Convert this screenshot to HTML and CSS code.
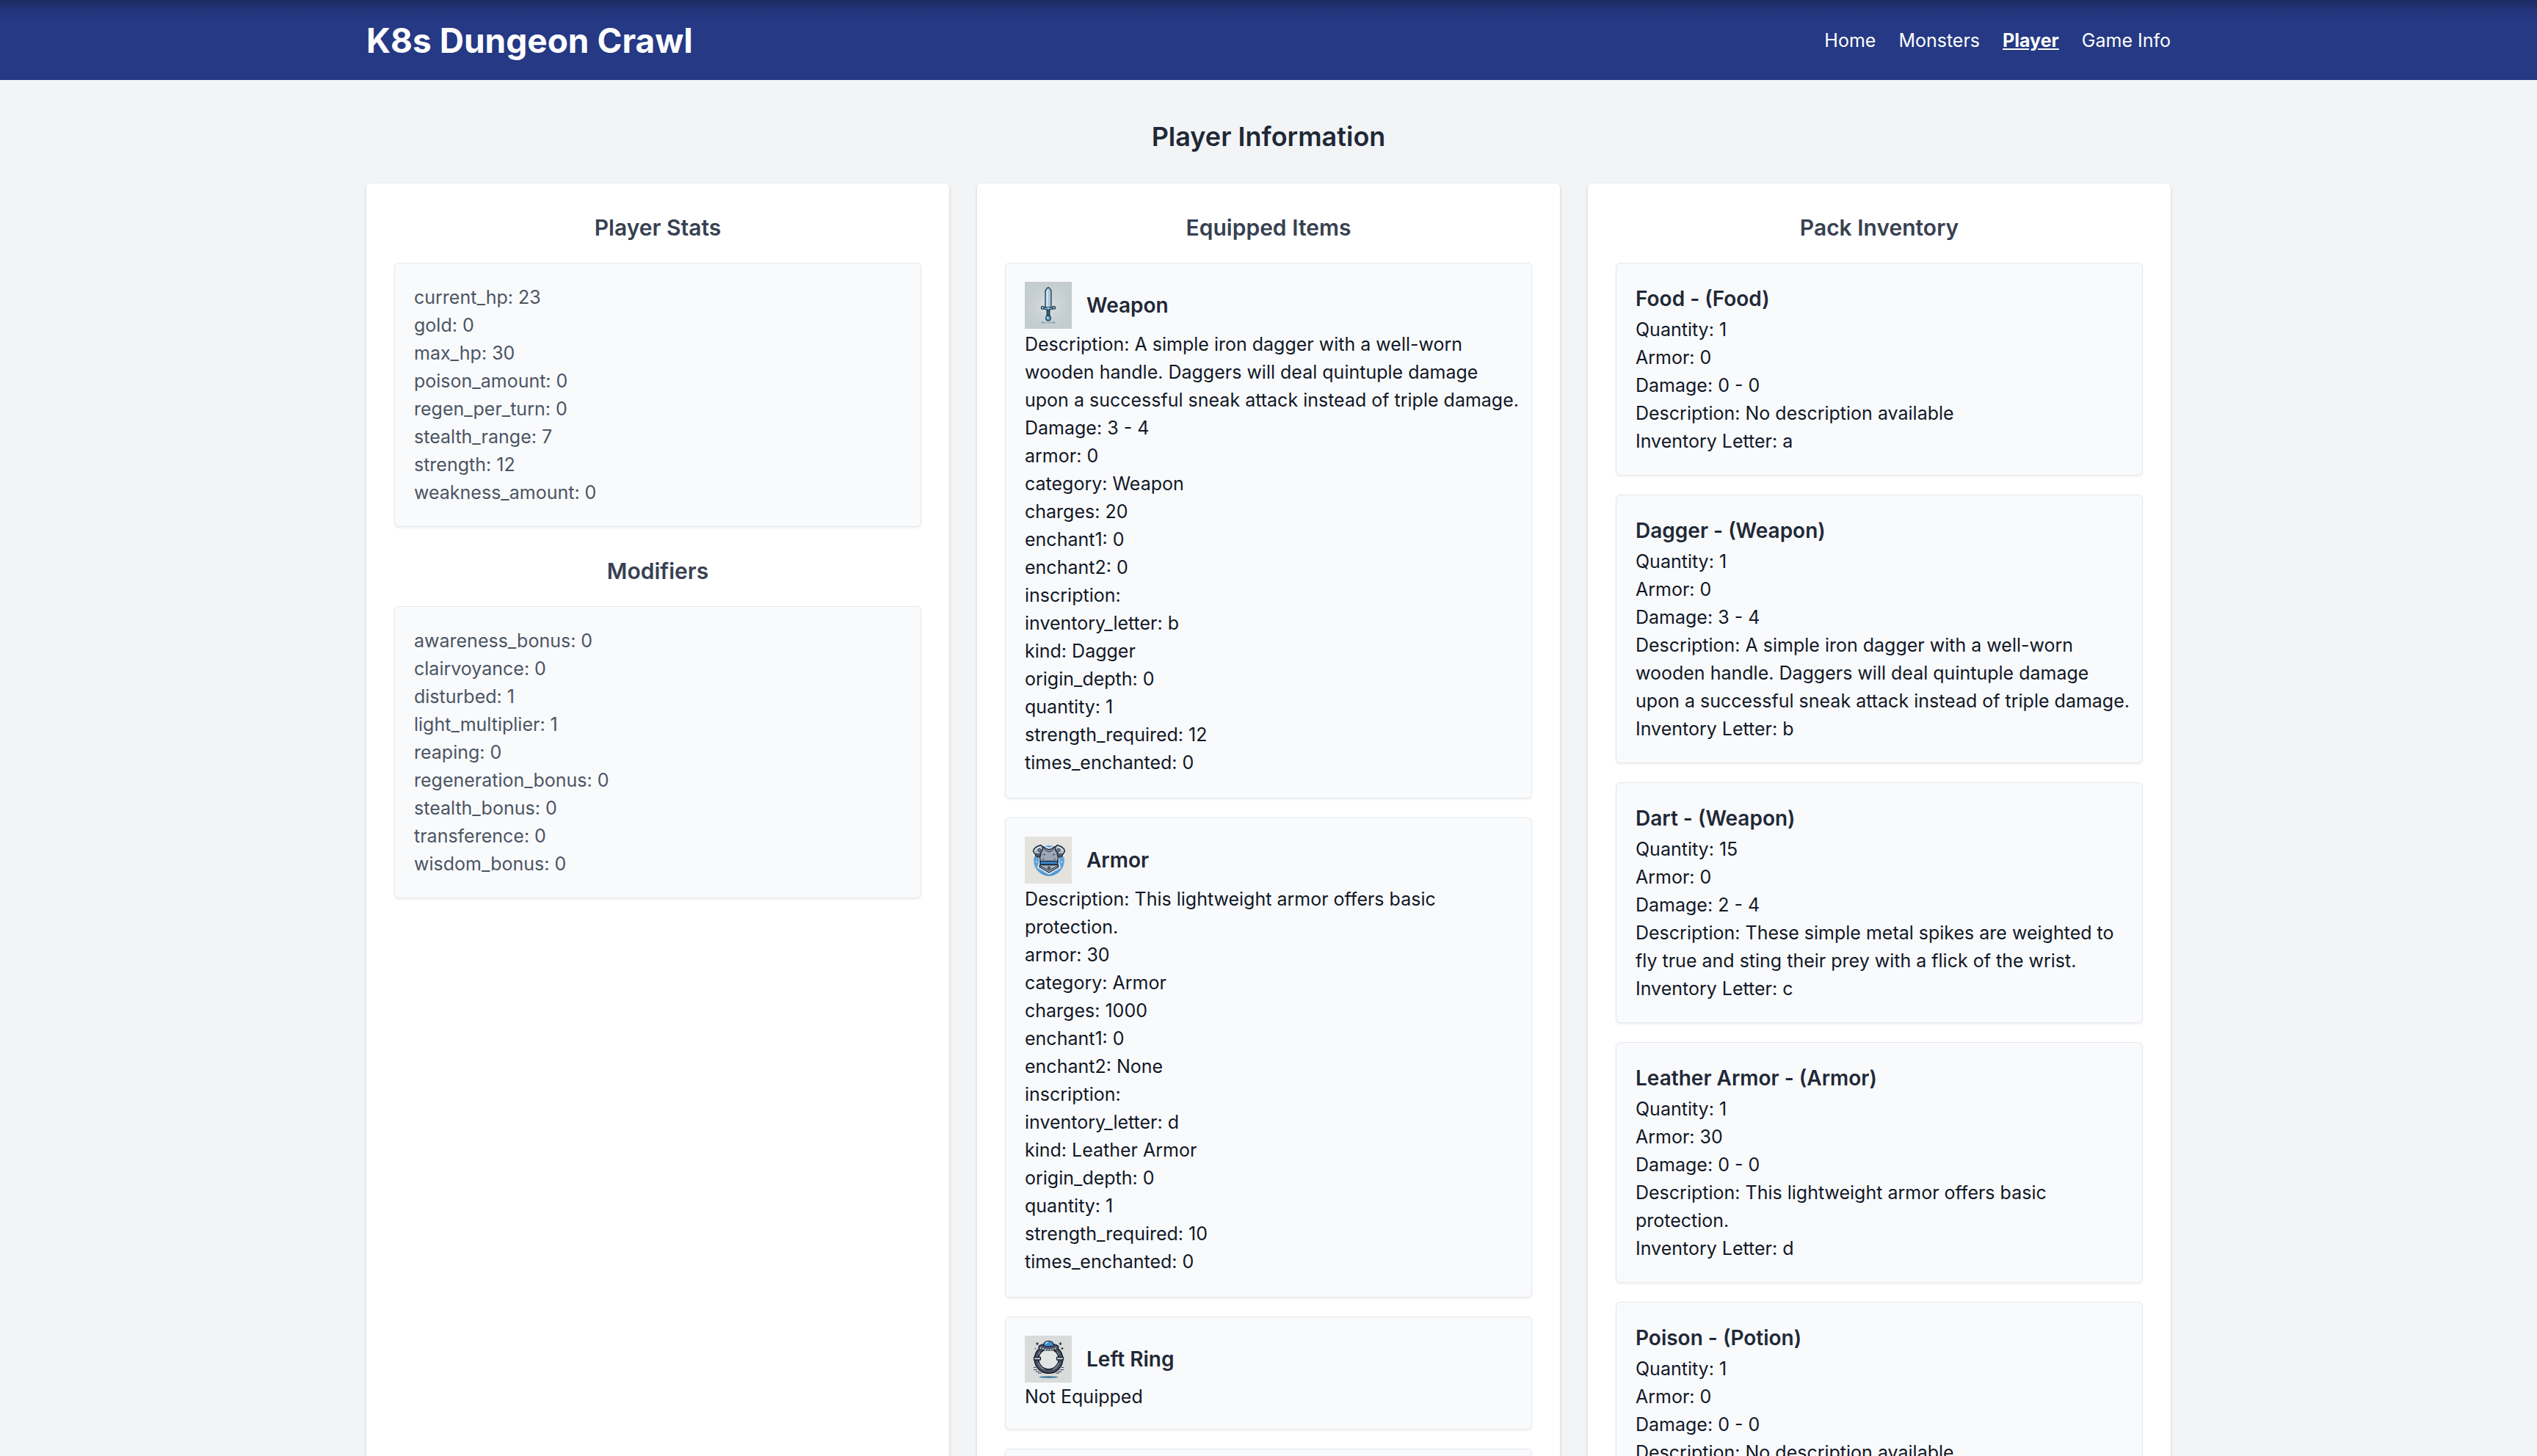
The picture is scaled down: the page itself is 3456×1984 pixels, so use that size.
FILE: index.html
```html
<!DOCTYPE html>
<html lang="en">
<head>
  <meta charset="utf-8">
  <meta name="viewport" content="width=device-width, initial-scale=1">
  <title>K8s Dungeon Crawl</title>
  <link rel="stylesheet" href="styles.css">
</head>
<body>
  <header class="site-header">
    <div class="container header-row">
      <h1 class="brand">K8s Dungeon Crawl</h1>
      <nav class="nav">
        <a class="nav-link" href="#home">Home</a>
        <a class="nav-link" href="#monsters">Monsters</a>
        <a class="nav-link nav-link-active" href="#player" aria-current="page">Player</a>
        <a class="nav-link" href="#info">Game Info</a>
      </nav>
    </div>
  </header>

  <main class="container page">
    <h2 class="page-title">Player Information</h2>
    <div class="columns">
      <section class="panel">
        <h3 class="panel-title">Player Stats</h3>
        <ul class="card stats">
          <li>current_hp: 23</li>
          <li>gold: 0</li>
          <li>max_hp: 30</li>
          <li>poison_amount: 0</li>
          <li>regen_per_turn: 0</li>
          <li>stealth_range: 7</li>
          <li>strength: 12</li>
          <li>weakness_amount: 0</li>
        </ul>
        <h3 class="panel-title panel-title-next">Modifiers</h3>
        <ul class="card stats">
          <li>awareness_bonus: 0</li>
          <li>clairvoyance: 0</li>
          <li>disturbed: 1</li>
          <li>light_multiplier: 1</li>
          <li>reaping: 0</li>
          <li>regeneration_bonus: 0</li>
          <li>stealth_bonus: 0</li>
          <li>transference: 0</li>
          <li>wisdom_bonus: 0</li>
        </ul>
      </section>

      <section class="panel">
        <h3 class="panel-title">Equipped Items</h3>
        <div class="card-list">
          <article class="card">
            <div class="item-head">
              <svg class="item-icon" viewBox="0 0 64 64" aria-hidden="true">
                <defs>
                  <radialGradient id="steel-bg"><stop offset="0" stop-color="#dde2e5"/><stop offset=".45" stop-color="#cdd4d7"/><stop offset="1" stop-color="#c3cccf"/></radialGradient>
                </defs>
                <rect width="64" height="64" fill="url(#steel-bg)"/>
                <path d="M28 35V13Q29 9 32 7.500Q35 9 36 13V35Z" fill="#a9cbdc" stroke="#20384f" stroke-width="1.300"/>
                <path d="M29.500 34V13.500L31.500 10V34Z" fill="#d9ecf3"/>
                <path d="M30.200 38H33.800V47H30.200Z" fill="#4d7690" stroke="#1b3147" stroke-width="1.200"/>
                <path d="M30 40.500H34M30 43H34M30 45.500H34" stroke="#1b3147"/>
                <path d="M25 34.500H39V36.500L34 38H30L25 36.500Z" fill="#6ba1bd" stroke="#1b3147" stroke-width="1.200"/>
                <circle cx="24.300" cy="35.300" r="1.900" fill="#b5d6e4" stroke="#1b3147" stroke-width="1.200"/>
                <circle cx="39.700" cy="35.300" r="1.900" fill="#b5d6e4" stroke="#1b3147" stroke-width="1.200"/>
                <circle cx="32" cy="36" r="1.500" fill="#8fd0ea"/>
                <circle cx="32" cy="49.500" r="3.300" fill="#5fa9cf" stroke="#1b3147" stroke-width="1.200"/>
                <circle cx="31" cy="48.500" r="1.200" fill="#b8e0f0"/>
                <path d="M25.500 55.500H38.500" stroke="#94b3c2" stroke-width="1.800"/>
                <path d="M23.500 55.500H25M39 55.500H40.500" stroke="#4e6b7d" stroke-width="1.800"/>
              </svg>
              <h4 class="item-title">Weapon</h4>
            </div>
            <ul class="details-long">
              <li>Description: A simple iron dagger with a well-worn wooden handle. Daggers will deal quintuple damage upon a successful sneak attack instead of triple damage.</li>
              <li>Damage: 3 - 4</li>
              <li>armor: 0</li>
              <li>category: Weapon</li>
              <li>charges: 20</li>
              <li>enchant1: 0</li>
              <li>enchant2: 0</li>
              <li>inscription:</li>
              <li>inventory_letter: b</li>
              <li>kind: Dagger</li>
              <li>origin_depth: 0</li>
              <li>quantity: 1</li>
              <li>strength_required: 12</li>
              <li>times_enchanted: 0</li>
            </ul>
          </article>

          <article class="card">
            <div class="item-head">
              <svg class="item-icon" viewBox="0 0 64 64" aria-hidden="true">
                <rect width="64" height="64" fill="#e3e2dd"/>
                <circle cx="33" cy="32.800" r="20.800" fill="#5ba3da"/>
                <path d="M20 47Q33 58 46 47Q40 53.500 33 53.500Q26 53.500 20 47Z" fill="#2f79b8"/>
                <path d="M22 11L26 13Q33 19 40 13L44 11Q53 13 55 21Q54 28 46 28V36L48 42L33 50.500L18 42L20 36V28Q12 28 11 21Q13 13 22 11Z" fill="#eef1f2" stroke="#eef1f2" stroke-width="2" stroke-linejoin="round"/>
                <path d="M22 13L26 14Q33 21 40 14L44 13L46 22L45 35H21L20 22Z" fill="#9ca8b3" stroke="#1e2c40" stroke-width="1.400" stroke-linejoin="round"/>
                <path d="M25.500 16Q33 25 40.500 16" fill="none" stroke="#1e2c40"/>
                <path d="M22 11.500Q12 14 11.500 20Q13 24.500 17 25Q23 24 25 15Z" fill="#aebac4" stroke="#1e2c40" stroke-width="1.500" stroke-linejoin="round"/>
                <path d="M44 11.500Q54 14 54.500 20Q53 24.500 49 25Q43 24 41 15Z" fill="#aebac4" stroke="#1e2c40" stroke-width="1.500" stroke-linejoin="round"/>
                <path d="M14 23L15 27Q18 29 21 27L22 23M52 23L51 27Q48 29 45 27L44 23" fill="#4c596a" stroke="#1e2c40" stroke-width="1.300"/>
                <path d="M14 19Q17 14 22 14M52 19Q49 14 44 14" fill="none" stroke="#e7edf1" stroke-width="1.200"/>
                <circle cx="20" cy="18.500" r="2" fill="#7d8b98" stroke="#1e2c40"/>
                <circle cx="46" cy="18.500" r="2" fill="#7d8b98" stroke="#1e2c40"/>
                <path d="M21 33.500H45V38H21Z" fill="#3a86cc" stroke="#1e2c40" stroke-width="1.400"/>
                <path d="M20.500 38.500H45.500L46 41.500L33 49L20 41.500Z" fill="#a7b2bc" stroke="#1e2c40" stroke-width="1.400" stroke-linejoin="round"/>
                <path d="M21 40L33 46L45 40" fill="none" stroke="#1e2c40"/>
                <circle cx="33" cy="42.500" r="1.600" fill="#6b7885" stroke="#1e2c40"/>
                <g fill="#1e2c40"><circle cx="26.500" cy="24.500" r="1"/><circle cx="39.500" cy="24.500" r="1"/><circle cx="25.500" cy="30.500" r=".8"/><circle cx="40.500" cy="30.500" r=".8"/></g>
                <g fill="#d6ebf8"><circle cx="16" cy="34.500" r="1"/><circle cx="50" cy="34.500" r="1"/></g>
              </svg>
              <h4 class="item-title">Armor</h4>
            </div>
            <ul class="details-long">
              <li>Description: This lightweight armor offers basic protection.</li>
              <li>armor: 30</li>
              <li>category: Armor</li>
              <li>charges: 1000</li>
              <li>enchant1: 0</li>
              <li>enchant2: None</li>
              <li>inscription:</li>
              <li>inventory_letter: d</li>
              <li>kind: Leather Armor</li>
              <li>origin_depth: 0</li>
              <li>quantity: 1</li>
              <li>strength_required: 10</li>
              <li>times_enchanted: 0</li>
            </ul>
          </article>

          <article class="card">
            <div class="item-head">
              <svg class="item-icon" viewBox="0 0 64 64" aria-hidden="true">
                <g id="ring-art">
                  <rect width="64" height="64" fill="#d9dcdb"/>
                  <circle cx="32.500" cy="32" r="14" fill="#e3e5e4"/>
                  <circle cx="32.500" cy="32" r="16.500" fill="none" stroke="#1b2230" stroke-width="7"/>
                  <circle cx="32.500" cy="32" r="16.500" fill="none" stroke="#4a5463" stroke-width="3.600"/>
                  <path d="M18.500 37A15 15 0 0 0 27 46M46.500 37A15 15 0 0 1 38 46M18.500 26L21 22M46.500 26L44 22" fill="none" stroke="#8e98a5" stroke-width="1.200"/>
                  <path d="M12.500 29.500H21.500V33H12.500ZM43.500 29.500H52.500V33H43.500Z" fill="#cdd3d8" stroke="#1b2230" stroke-width="1.300" stroke-linejoin="round"/>
                  <ellipse cx="32.500" cy="15.500" rx="13.500" ry="4.500" fill="#4a5463" stroke="#1b2230" stroke-width="1.400"/>
                  <path d="M20.500 16.500Q32.500 22 44.500 16.500" fill="none" stroke="#c4ccd3" stroke-width="2" stroke-dasharray="2 1.500"/>
                  <path d="M25.500 13.500Q26 7.300 32.500 7.300Q39 7.300 39.500 13.500Q32.500 16 25.500 13.500Z" fill="#3f8fd0" stroke="#1b2f4a" stroke-width="1.300"/>
                  <path d="M28 11.500Q29 9 32 9" fill="none" stroke="#b9e0f8" stroke-width="1.600"/>
                  <path d="M17 9V13M15 11H19M48.500 9V13M46.500 11H50.500M51 16V19M49.500 17.500H52.500" stroke="#1b2230" stroke-width="1.200"/>
                  <circle cx="14.500" cy="17.500" r=".8" fill="#1b2230"/>
                  <path d="M12 43.500H15M12 46.500H17M15 49H20M18 51H23M50 43.500H53M48 46.500H53M45 49H50M42 51H47" stroke="#313b49"/>
                  <ellipse cx="32.500" cy="56.500" rx="13" ry="1.400" fill="#4b83ac"/>
                </g>
              </svg>
              <h4 class="item-title">Left Ring</h4>
            </div>
            <p>Not Equipped</p>
          </article>

          <article class="card">
            <div class="item-head">
              <svg class="item-icon" viewBox="0 0 64 64" aria-hidden="true"><use href="#ring-art"/></svg>
              <h4 class="item-title">Right Ring</h4>
            </div>
            <p>Not Equipped</p>
          </article>
        </div>
      </section>

      <section class="panel">
        <h3 class="panel-title">Pack Inventory</h3>
        <div class="card-list">
          <article class="card">
            <h4 class="item-title">Food - (Food)</h4>
            <ul class="details">
              <li>Quantity: 1</li>
              <li>Armor: 0</li>
              <li>Damage: 0 - 0</li>
              <li>Description: No description available</li>
              <li>Inventory Letter: a</li>
            </ul>
          </article>
          <article class="card">
            <h4 class="item-title">Dagger - (Weapon)</h4>
            <ul class="details">
              <li>Quantity: 1</li>
              <li>Armor: 0</li>
              <li>Damage: 3 - 4</li>
              <li>Description: A simple iron dagger with a well-worn wooden handle. Daggers will deal quintuple damage upon a successful sneak attack instead of triple damage.</li>
              <li>Inventory Letter: b</li>
            </ul>
          </article>
          <article class="card">
            <h4 class="item-title">Dart - (Weapon)</h4>
            <ul class="details">
              <li>Quantity: 15</li>
              <li>Armor: 0</li>
              <li>Damage: 2 - 4</li>
              <li>Description: These simple metal spikes are weighted to fly true and sting their prey with a flick of the wrist.</li>
              <li>Inventory Letter: c</li>
            </ul>
          </article>
          <article class="card">
            <h4 class="item-title">Leather Armor - (Armor)</h4>
            <ul class="details">
              <li>Quantity: 1</li>
              <li>Armor: 30</li>
              <li>Damage: 0 - 0</li>
              <li>Description: This lightweight armor offers basic protection.</li>
              <li>Inventory Letter: d</li>
            </ul>
          </article>
          <article class="card">
            <h4 class="item-title">Poison - (Potion)</h4>
            <ul class="details">
              <li>Quantity: 1</li>
              <li>Armor: 0</li>
              <li>Damage: 0 - 0</li>
              <li>Description: No description available</li>
              <li>Inventory Letter: e</li>
            </ul>
          </article>
        </div>
      </section>
    </div>
  </main>
</body>
</html>
```

FILE: styles.css
```css
*,
*::before,
*::after {
  box-sizing: border-box;
}

html {
  scrollbar-width: none;
}

body {
  margin: 0;
  background: #f3f4f6;
  color: #111827;
  font-family: Inter, "Liberation Sans", sans-serif;
  font-size: 25px;
  line-height: 38px;
}

h1,
h2,
h3,
h4,
p,
ul {
  margin: 0;
  padding: 0;
}

ul {
  list-style: none;
}

.container {
  width: 100%;
  max-width: 2458px;
  margin: 0 auto;
}

/* Header */
.site-header {
  padding: 26px 0 25px;
  background: linear-gradient(#1c2a62 0, #22357a 14px, #253984 28px);
  color: #ffffff;
}

.header-row {
  display: flex;
  align-items: center;
  justify-content: space-between;
}

.brand {
  font-size: 46px;
  font-weight: 700;
  line-height: 58px;
}

.nav {
  display: flex;
  gap: 31px;
}

.nav-link {
  color: inherit;
  text-decoration: none;
}

.nav-link-active {
  font-weight: 700;
  text-decoration: underline;
}

/* Page */
.page {
  padding: 51px 0;
}

.page-title {
  margin-bottom: 38px;
  color: #1f2937;
  font-size: 36px;
  font-weight: 600;
  line-height: 52px;
  text-align: center;
}

.columns {
  display: grid;
  grid-template-columns: repeat(3, 1fr);
  gap: 38px;
}

.panel {
  padding: 38px;
  border-radius: 6px;
  background: #ffffff;
  box-shadow: 0 2px 5px rgba(0, 0, 0, 0.1), 0 1px 3px rgba(0, 0, 0, 0.06);
}

.panel-title {
  margin-bottom: 25px;
  color: #374151;
  font-size: 30px;
  font-weight: 600;
  line-height: 45px;
  text-align: center;
}

.panel-title-next {
  margin-top: 38px;
}

.card-list {
  display: grid;
  gap: 26px;
}

.card {
  padding: 25px 16px 25px 26px;
  border: 1px solid #e5e7eb;
  border-radius: 6px;
  background: #f9fafc;
  box-shadow: 0 2px 3px rgba(0, 0, 0, 0.05);
}

.stats {
  padding-block: 27px;
  color: #4b5563;
}

.item-head {
  display: flex;
  align-items: center;
  gap: 20px;
}

.item-icon {
  display: block;
  width: 64px;
  height: 64px;
}

.item-title {
  color: #1f2937;
  font-size: 28px;
  font-weight: 600;
  line-height: 46px;
}

.details {
  padding-bottom: 2px;
}

.details-long {
  padding-block: 2px 4px;
}
```
